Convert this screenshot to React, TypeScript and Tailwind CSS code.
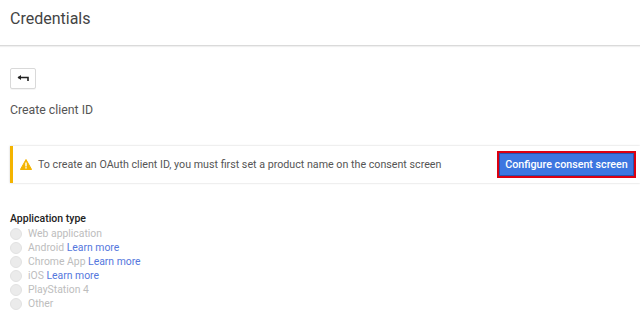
import React from "react";

const types: { label: string; link?: boolean }[] = [
  { label: "Web application" },
  { label: "Android", link: true },
  { label: "Chrome App", link: true },
  { label: "iOS", link: true },
  { label: "PlayStation 4" },
  { label: "Other" },
];

export default function App() {
  return (
    <div className="w-[640px] h-[323px] bg-white overflow-hidden font-['Roboto',sans-serif]">
      <div className="h-[46px] flex items-center px-[10px] border-b border-[#dadada] shadow-[0_1px_1px_rgba(0,0,0,0.06)]">
        <h1 className="text-[16px] text-[#444] leading-none -mt-[8px]">Credentials</h1>
      </div>

      <div className="pl-[10px] pt-[22px]">
        <button className="w-[26px] h-[21px] border border-[#d9d9d9] rounded-[2px] bg-white flex items-center justify-center shadow-[0_1px_0_rgba(0,0,0,0.04)]">
          <svg width="12" height="7" viewBox="0 0 12 7">
            <path d="M1 2.5 L11 2.5 L11 6" fill="none" stroke="#222" strokeWidth="1.6" />
            <path d="M0.5 2.5 L4 0 L4 5 Z" fill="#222" />
          </svg>
        </button>
        <div className="mt-[15px] text-[12.3px] text-[#555] leading-none">Create client ID</div>
      </div>

      <div className="ml-[10px] mt-[30px] h-[37px] flex items-center border-l-[3px] border-[#f4b400] bg-white shadow-[0_0_2px_rgba(0,0,0,0.2)]">
        <svg width="12" height="11" viewBox="0 0 12 11" className="ml-[7px] mr-[6px]">
          <path d="M6 0.5 L11.6 10.5 L0.4 10.5 Z" fill="#f4b400" stroke="#f4b400" strokeLinejoin="round" />
          <rect x="5.3" y="3.5" width="1.4" height="4" fill="#fff" />
          <rect x="5.3" y="8.2" width="1.4" height="1.3" fill="#fff" />
        </svg>
        <span className="text-[10.7px] text-[#555] whitespace-nowrap">
          To create an OAuth client ID, you must first set a product name on the consent screen
        </span>
        <div className="ml-auto mr-[4px] border-2 border-[#dc0010]">
          <button className="h-[23px] w-[135px] bg-[#3d76e0] border border-[#2a52ad] text-white text-[10.7px] font-medium flex items-center justify-center whitespace-nowrap">
            Configure consent screen
          </button>
        </div>
      </div>

      <div className="pl-[10px] pt-[31px]">
        <div className="text-[10.5px] text-[#222] font-medium leading-none mb-[2px]">Application type</div>
        <div className="flex flex-col">
          {types.map((t) => (
            <div key={t.label} className="h-[14px] flex items-center">
              <span className="w-[12px] h-[12px] rounded-full bg-[#ebebeb] border border-[#e2e2e2]" />
              <span className="ml-[6px] text-[10.4px] text-[#bdbdbd] leading-none">
                {t.label}
                {t.link && <span className="text-[#5577dd]"> Learn more</span>}
              </span>
            </div>
          ))}
        </div>
      </div>
    </div>
  );
}
